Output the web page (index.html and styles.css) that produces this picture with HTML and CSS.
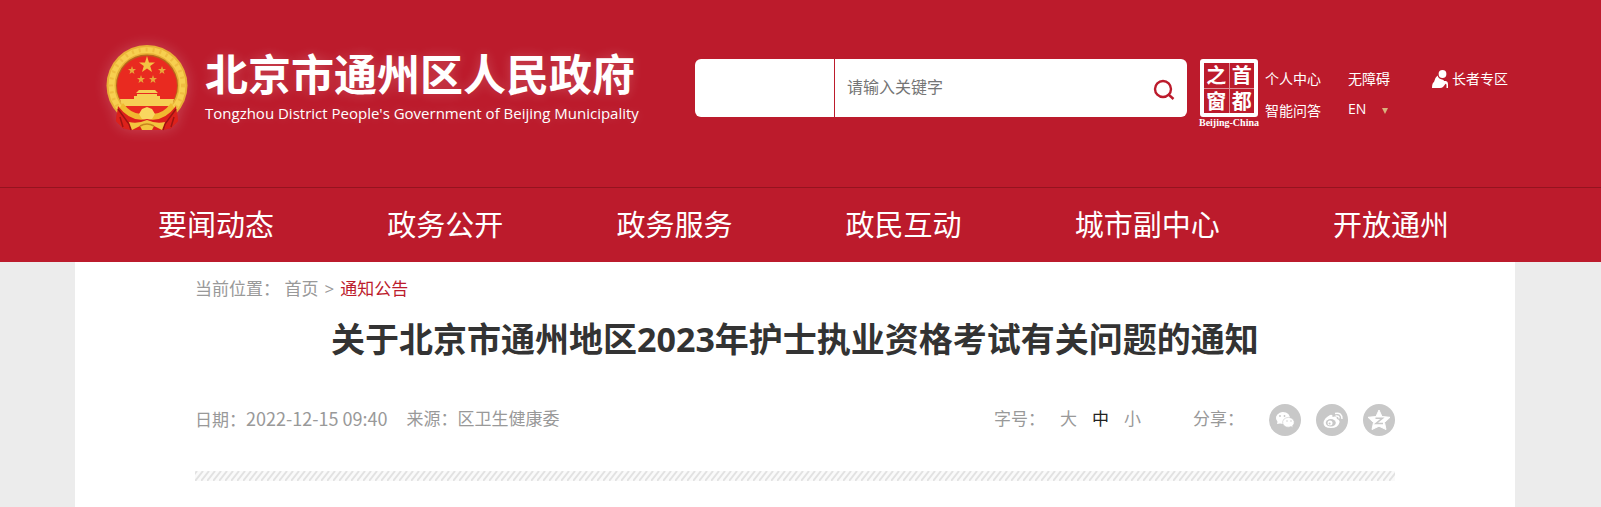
FILE: index.html
```
<!DOCTYPE html>
<html lang="zh-CN">
<head>
<meta charset="utf-8">
<title>关于北京市通州地区2023年护士执业资格考试有关问题的通知</title>
<link rel="stylesheet" href="styles.css">
</head>
<body>
<header class="site-header">
  <div class="masthead">
    <a class="brand" href="#">
      <svg class="emblem" viewBox="0 0 82 86" aria-hidden="true">
        <path d="M12 58 L10 76 L17 83 L25 85 H57 L65 83 L72 76 L70 58Z" fill="#d8201a"/>
        <path d="M11 62 L20 78 M15 68 L18 83 M71 62 L62 78 M67 68 L64 83" stroke="#8e1010" stroke-width="2"/>
        <circle cx="41" cy="40.500" r="40.500" fill="#e9b137"/>
        <circle cx="41" cy="40.500" r="35.500" fill="none" stroke="#f7cf50" stroke-width="6"/>
        <circle cx="41" cy="40.500" r="36" fill="none" stroke="#efbd40" stroke-width="4" stroke-dasharray="2 5"/>
        <circle cx="41" cy="40.500" r="31" fill="#b8651a"/>
        <circle cx="41" cy="41" r="30" fill="#e92a20"/>
        <path d="M41 11 L43 17.500 L49 17.500 L44.200 21 L46 27 L41 23.500 L36 27 L37.800 21 L33 17.500 L39 17.500Z" fill="#f3c443"/>
        <g fill="#e8a93b">
          <path id="s" d="M26 21 L27 24 L30 24 L27.600 26 L28.500 29 L26 27.200 L23.500 29 L24.400 26 L22 24 L25 24Z"/>
          <use href="#s" x="30"/><use href="#s" x="9" y="9"/><use href="#s" x="21" y="9"/>
        </g>
        <path d="M33 45 H49 L52 48 H30Z M31 49 H51 V51 H54 V54 H28 V51 H31Z M14 54 H68 L66 61 H16Z" fill="#f6cf55"/>
        <path d="M17 61 H65 L58 69 H24Z" fill="#e92a20"/>
        <path d="M17 58 Q27 72 41 68 Q55 72 65 58 L69 64 Q56 79 41 76 Q26 79 13 64Z" fill="#f0b930"/>
        <path d="M41 62 L46 64 L49 69 L46 74 L41 76 L36 74 L33 69 L36 64Z" fill="#f9d75f"/>
        <path d="M12 61 Q25 78 41 74 Q57 78 70 61 L72 76 L65 83 L57 85 H25 L17 83 L10 76Z" fill="#dd211b"/>
        <path d="M12 64 L23 79 L25 85 M70 64 L59 79 L57 85 M14 72 L17 82 M68 72 L65 82" fill="none" stroke="#9c1412" stroke-width="1.500"/>
        <path d="M23 77 Q32 79 41 75 Q50 79 59 77 L56 85 L48 81 L46 85 H36 L34 81 L26 85Z" fill="#f3c53e"/>
        <path d="M34 81 Q41 77 48 81" fill="none" stroke="#c9851e" stroke-width="1.500"/>
      </svg>
      <span class="brand-text">
        <span class="brand-cn">北京市通州区人民政府</span>
        <span class="brand-en">Tongzhou District People's Government of Beijing Municipality</span>
      </span>
    </a>
    <form class="search">
      <button class="scope" type="button" aria-label="搜索范围"></button>
      <input class="keyword" type="text" placeholder="请输入关键字" aria-label="关键字">
      <button class="search-btn" type="submit" aria-label="搜索">
        <svg viewBox="0 0 22 22" width="22" height="22" fill="none" stroke="#bc1b2c" stroke-width="2.400"><circle cx="10" cy="10" r="8"/><path d="M15.500 15.500 L20.500 20"/></svg>
      </button>
    </form>
    <a class="seal" href="#">
      <span class="seal-box"><span>之</span><span>首</span><span>窗</span><span>都</span></span>
      <span class="seal-en">Beijing-China</span>
    </a>
    <div class="tools">
      <a href="#">个人中心</a>
      <a href="#">无障碍</a>
      <a class="elder" href="#">
        <svg viewBox="0 0 16 18" width="16" height="18" fill="#fff"><circle cx="10.500" cy="4" r="3.900"/><path d="M5.500 5.500 Q6.500 9 10 9.500 Q12 9.700 12 11 H14 Q16 11.500 16 14 V18 H14.500 V15 Q14 13 13 14.500 L11 17 Q10 18 8 18 H0 Q0 13 2 12 Q2.500 8 5.500 5.500Z"/></svg>
        长者专区</a>
      <a href="#">智能问答</a>
      <a class="lang" href="#">EN <svg viewBox="0 0 6 6" width="6" height="6"><path d="M0 0H6L3 6Z" fill="#d9b27c"/></svg></a>
    </div>
  </div>
  <nav class="main-nav">
    <a href="#">要闻动态</a>
    <a href="#">政务公开</a>
    <a href="#">政务服务</a>
    <a href="#">政民互动</a>
    <a href="#">城市副中心</a>
    <a href="#">开放通州</a>
  </nav>
</header>
<main class="page">
  <article class="content">
    <div class="crumbs"><span>当前位置： <a href="#">首页</a></span><span>&gt;</span><a class="current" href="#">通知公告</a></div>
    <h1>关于北京市通州地区2023年护士执业资格考试有关问题的通知</h1>
    <div class="meta">
      <span class="date">日期：<time>2022-12-15 09:40</time></span>
      <span class="source">来源：区卫生健康委</span>
      <div class="sizes"><span class="label">字号：</span><button type="button">大</button><button class="on" type="button">中</button><button type="button">小</button></div>
      <span class="share-label">分享：</span>
      <div class="share">
        <a href="#" aria-label="微信"><svg viewBox="0 0 32 32" width="32" height="32"><circle cx="16" cy="16" r="16" fill="#c8c8c8"/><path d="M8 20 L8.500 17.800 A7 6 0 1 1 14 20 L11 19.500Z" fill="#fff"/><path d="M24 23.500 L23.500 21.800 A5.800 4.900 0 1 0 20 23.200 L22 22.500Z" fill="#fff" stroke="#c8c8c8" stroke-width=".6"/><g fill="#c8c8c8"><circle cx="11" cy="12" r=".9"/><circle cx="15.500" cy="12" r=".9"/><circle cx="18" cy="17" r=".7"/><circle cx="22" cy="17" r=".7"/></g></svg></a>
        <a href="#" aria-label="微博"><svg viewBox="0 0 32 32" width="32" height="32"><circle cx="16" cy="16" r="16" fill="#c8c8c8"/><path d="M14 11 Q17 10 16.500 13 Q21 11.500 21 15 Q24 16 23.500 18.500 Q22 24 15 24 Q7.500 24 7.500 19 Q8 14 14 11Z" fill="#fff"/><ellipse cx="14.800" cy="18.800" rx="5" ry="3.700" fill="#c8c8c8"/><circle cx="14" cy="19" r="2.500" fill="#fff"/><circle cx="13.600" cy="19.400" r="1" fill="#c8c8c8"/><path d="M19 9.500 Q26 8 26 15 M19.500 12 Q23.500 11.500 23 14.500" fill="none" stroke="#fff" stroke-width="1.400"/></svg></a>
        <a href="#" aria-label="QQ空间"><svg viewBox="0 0 32 32" width="32" height="32"><circle cx="16" cy="16" r="16" fill="#c8c8c8"/><path d="M16 6 L19 12.500 L27 13.300 L21.500 18.500 L23 25.500 L16 22.200 L9 25.500 L10.500 18.500 L5 13.300 L13 12.500Z" fill="#fff" stroke="#fff" stroke-linejoin="round"/><path d="M12.500 14.200 H19.500 L13 19.500 H20" fill="none" stroke="#c8c8c8" stroke-width="1.500"/></svg></a>
      </div>
    </div>
    <svg class="hatch" aria-hidden="true"><defs><pattern id="h" width="6" height="10" patternUnits="userSpaceOnUse"><rect width="6" height="10" fill="#fafafa"/><path d="M-6 10 L2 0 M0 10 L8 0 M-12 10 L-4 0" stroke="#e2e2e2" stroke-width="2"/></pattern></defs><rect width="100%" height="10" fill="url(#h)"/></svg>
  </article>
</main>
</body>
</html>
```
FILE: styles.css
```
* { box-sizing: border-box; }
body {
  margin: 0;
  min-height: 100vh;
  display: flex;
  flex-direction: column;
  background: #ececec;
  color: #999;
  font-family: "Open Sans", "Noto Sans CJK SC", sans-serif;
  font-size: 17px;
}
a { color: inherit; text-decoration: none; }
button { border: 0; padding: 0; background: none; color: inherit; font: inherit; cursor: pointer; }
.site-header { background: #bc1b2c; color: #fff; }
.masthead {
  display: flex;
  align-items: flex-start;
  padding: 45px 85px 56px 106px;
}
.brand { display: flex; gap: 17px; width: 589px; }
.emblem { width: 82px; height: 86px; filter: drop-shadow(0 0 7px rgba(255,255,255,.2)); }
.brand-text { display: flex; flex-direction: column; padding-top: 5px; white-space: nowrap; text-shadow: 0 0 12px rgba(255,255,255,.2); }
.brand-cn { font-size: 43px; line-height: 50px; font-weight: 700; }
.brand-en { font-size: 15px; line-height: 26px; }
.search {
  display: flex;
  flex: 1;
  max-width: 492px;
  height: 58px;
  margin-top: 14px;
  background: #fff;
  border-radius: 6px;
  overflow: hidden;
}
.scope { width: 140px; border-right: 1px solid #bc1b2c; }
.keyword { flex: 1; min-width: 0; border: 0; outline: 0; padding: 0 12px 2px; font: inherit; font-size: 16px; color: #333; }
.keyword::placeholder { color: #757575; opacity: 1; }
.search-btn { width: 46px; display: flex; align-items: center; justify-content: center; padding-top: 3px; }
.seal { display: flex; flex-direction: column; align-items: center; margin: 14px 0 0 10px; width: 64px; }
.seal-box {
  display: grid;
  grid-template-columns: 1fr 1fr;
  gap: 1px;
  width: 58px;
  height: 58px;
  border: 4px solid #fff;
  border-radius: 3px;
  background: #dd8d96;
}
.seal-box span { background: #bc1b2c; font: 700 20px/24px "Noto Sans CJK SC", sans-serif; text-align: center; }
.seal-en { font: 700 10px/11px "Liberation Serif", serif; white-space: nowrap; }
.tools {
  display: grid;
  grid-template-columns: 83px 84px auto;
  row-gap: 10px;
  margin: 23px 0 0 4px;
  font-size: 14px;
  line-height: 22px;
  white-space: nowrap;
}
.elder { display: flex; align-items: center; gap: 4px; }
.lang { line-height: 18px; }
.lang svg { margin-left: 12px; }
.main-nav {
  display: flex;
  justify-content: space-between;
  padding: 0 152px 0 158px;
  border-top: 1px solid #95131f;
  font-size: 29px;
  line-height: 74px;
  white-space: nowrap;
}
.page {
  flex: 1;
  align-self: center;
  width: 90%;
  max-width: 1440px;
  margin-right: 11px;
  padding: 0 120px;
  background: #fff;
}
.content { display: flex; flex-direction: column; }
.crumbs { display: flex; gap: 6px; margin-top: 14px; line-height: 26px; }
.crumbs .current { color: #bc1b2c; }
h1 { margin: 12px 0 0; color: #333; font-size: 34px; line-height: 50px; font-weight: 700; text-align: center; white-space: nowrap; }
.meta { display: flex; align-items: center; margin-top: 40px; height: 32px; line-height: 26px; padding-bottom: 2px; white-space: nowrap; }
.date { margin-right: 19px; }
time { font-family: "Noto Sans CJK SC", sans-serif; font-size: 18px; line-height: 26px; }
.sizes { display: flex; gap: 15px; margin-left: auto; }
.sizes .on { color: #222; }
.share-label { margin: 0 25px 0 52px; }
.share { display: flex; gap: 15px; padding-top: 2px; }
.share a, .share svg { display: block; }
.hatch { width: 100%; height: 10px; margin-top: 35px; }
```
